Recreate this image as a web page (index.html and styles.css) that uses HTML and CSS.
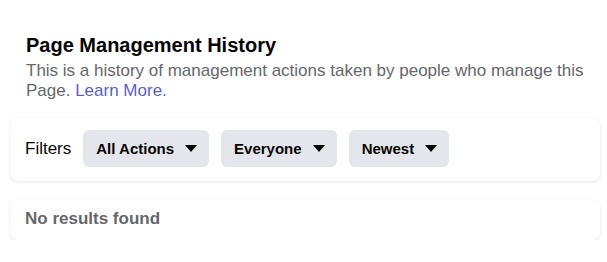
FILE: index.html
```html
<!DOCTYPE html>
<html>
<head>
<meta charset="utf-8">
<link rel="stylesheet" href="styles.css">
</head>
<body>
<div class="page">
  <div class="header">
    <h1 class="title">Page Management History</h1>
    <p class="desc">This is a history of management actions taken by people who manage this Page. <a class="link" href="#">Learn More.</a></p>
  </div>
  <div class="card filters">
    <span class="label">Filters</span>
    <button class="btn">All Actions <svg class="caret" viewBox="0 0 12 7" width="12" height="7"><path d="M0 0h12L6 7z" fill="#050505"/></svg></button>
    <button class="btn">Everyone <svg class="caret" viewBox="0 0 12 7" width="12" height="7"><path d="M0 0h12L6 7z" fill="#050505"/></svg></button>
    <button class="btn">Newest <svg class="caret" viewBox="0 0 12 7" width="12" height="7"><path d="M0 0h12L6 7z" fill="#050505"/></svg></button>
  </div>
  <div class="card empty">No results found</div>
</div>
</body>
</html>
```
FILE: styles.css
```css
html, body {
  margin: 0;
  padding: 0;
  background: #ffffff;
}
body {
  font-family: "Liberation Sans", Arial, sans-serif;
  color: #050505;
}
.page {
  padding: 33px 7px 0 10px;
}
.header {
  padding: 0 16px 0 16px;
}
.title {
  margin: 0;
  font-size: 20px;
  line-height: 24px;
  font-weight: bold;
  color: #050505;
}
.desc {
  margin: 4px 0 0 0;
  font-size: 17px;
  line-height: 20px;
  color: #65676b;
}
.link {
  display: inline-block;
  line-height: 20px;
  color: #5b5fc7;
  text-decoration: none;
}
.card {
  background: #fff;
  border-radius: 8px;
  box-shadow: 0 1px 3px rgba(0, 0, 0, 0.12);
}
.filters {
  margin-top: 17px;
  display: flex;
  align-items: center;
  gap: 12px;
  padding: 12px 15px 14px 15px;
}
.label {
  font-size: 17px;
  color: #050505;
}
.btn {
  display: flex;
  align-items: center;
  gap: 11px;
  height: 37px;
  padding: 0 12px 0 13px;
  border: none;
  border-radius: 6px;
  background: #e4e6eb;
  font-family: "Liberation Sans", Arial, sans-serif;
  font-size: 15px;
  font-weight: bold;
  color: #050505;
}
.caret {
  display: block;
}
.empty {
  margin-top: 19px;
  padding: 9px 15px 11px 15px;
  font-size: 17px;
  line-height: 20px;
  font-weight: bold;
  color: #65676b;
}
```
